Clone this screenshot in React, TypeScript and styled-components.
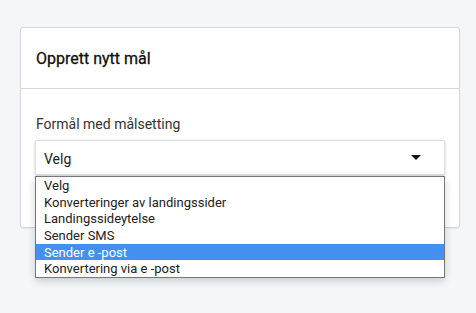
import React, { useState } from "react";
import styled, { createGlobalStyle } from "styled-components";

const GlobalStyle = createGlobalStyle`
  html, body {
    margin: 0;
    padding: 0;
    background: #f4f7fa;
    font-family: Roboto, "Liberation Sans", Arial, sans-serif;
  }
`;

const Page = styled.div`
  min-height: 313px;
  box-sizing: border-box;
  padding: 27px 16px 0 20px;
`;

const Card = styled.div`
  width: 438px;
  background: #ffffff;
  border: 1px solid #d3d6da;
  border-radius: 3px;
  box-shadow: 0 1px 2px rgba(0, 0, 0, 0.06);
`;

const CardHeader = styled.div`
  height: 60px;
  display: flex;
  align-items: center;
  padding: 0 15px;
  border-bottom: 1px solid #d3d6da;
`;

const Title = styled.h2`
  margin: 0;
  font-size: 16px;
  font-weight: 400;
  -webkit-text-stroke: 0.3px #111;
  color: #111;
  padding-top: 1px;
`;

const CardBody = styled.div`
  padding: 27px 14px 52px;
`;

const Label = styled.label`
  display: block;
  font-size: 14px;
  line-height: 16px;
  color: #333;
  margin: 0 0 8px 1px;
`;

const SelectWrap = styled.div`
  position: relative;
`;

const SelectBox = styled.div`
  height: 35px;
  box-sizing: border-box;
  display: flex;
  align-items: center;
  justify-content: space-between;
  padding: 2px 23px 0 8px;
  background: #fff;
  border: 1px solid #e2e2e2;
  border-radius: 2px;
  box-shadow: 0 1px 3px rgba(0, 0, 0, 0.22);
  font-size: 14px;
  color: #222;
`;

const Caret = styled.span`
  width: 0;
  height: 0;
  border-left: 5px solid transparent;
  border-right: 5px solid transparent;
  border-top: 5px solid #111;
  margin-top: -2px;
`;

const OptionList = styled.ul`
  position: absolute;
  top: 36px;
  left: 0;
  right: 0;
  margin: 0;
  padding: 0;
  list-style: none;
  background: #fff;
  border: 1px solid #767676;
  box-shadow: 0 3px 8px rgba(0, 0, 0, 0.18);
  z-index: 2;
`;

const Option = styled.li<{ $active: boolean }>`
  height: 16.7px;
  line-height: 17px;
  padding-left: 8px;
  font-size: 13px;
  color: ${(p) => (p.$active ? "#fff" : "#222")};
  background: ${(p) => (p.$active ? "#4390f1" : "transparent")};
`;

const options = [
  "Velg",
  "Konverteringer av landingssider",
  "Landingssideytelse",
  "Sender SMS",
  "Sender e -post",
  "Konvertering via e -post",
];

export default function App() {
  const [hovered, setHovered] = useState(4);

  return (
    <Page>
      <GlobalStyle />
      <Card>
        <CardHeader>
          <Title>Opprett nytt mål</Title>
        </CardHeader>
        <CardBody>
          <Label>Formål med målsetting</Label>
          <SelectWrap>
            <SelectBox>
              <span>Velg</span>
              <Caret />
            </SelectBox>
            <OptionList>
              {options.map((o, i) => (
                <Option
                  key={o}
                  $active={i === hovered}
                  onMouseEnter={() => setHovered(i)}
                >
                  {o}
                </Option>
              ))}
            </OptionList>
          </SelectWrap>
        </CardBody>
      </Card>
    </Page>
  );
}
